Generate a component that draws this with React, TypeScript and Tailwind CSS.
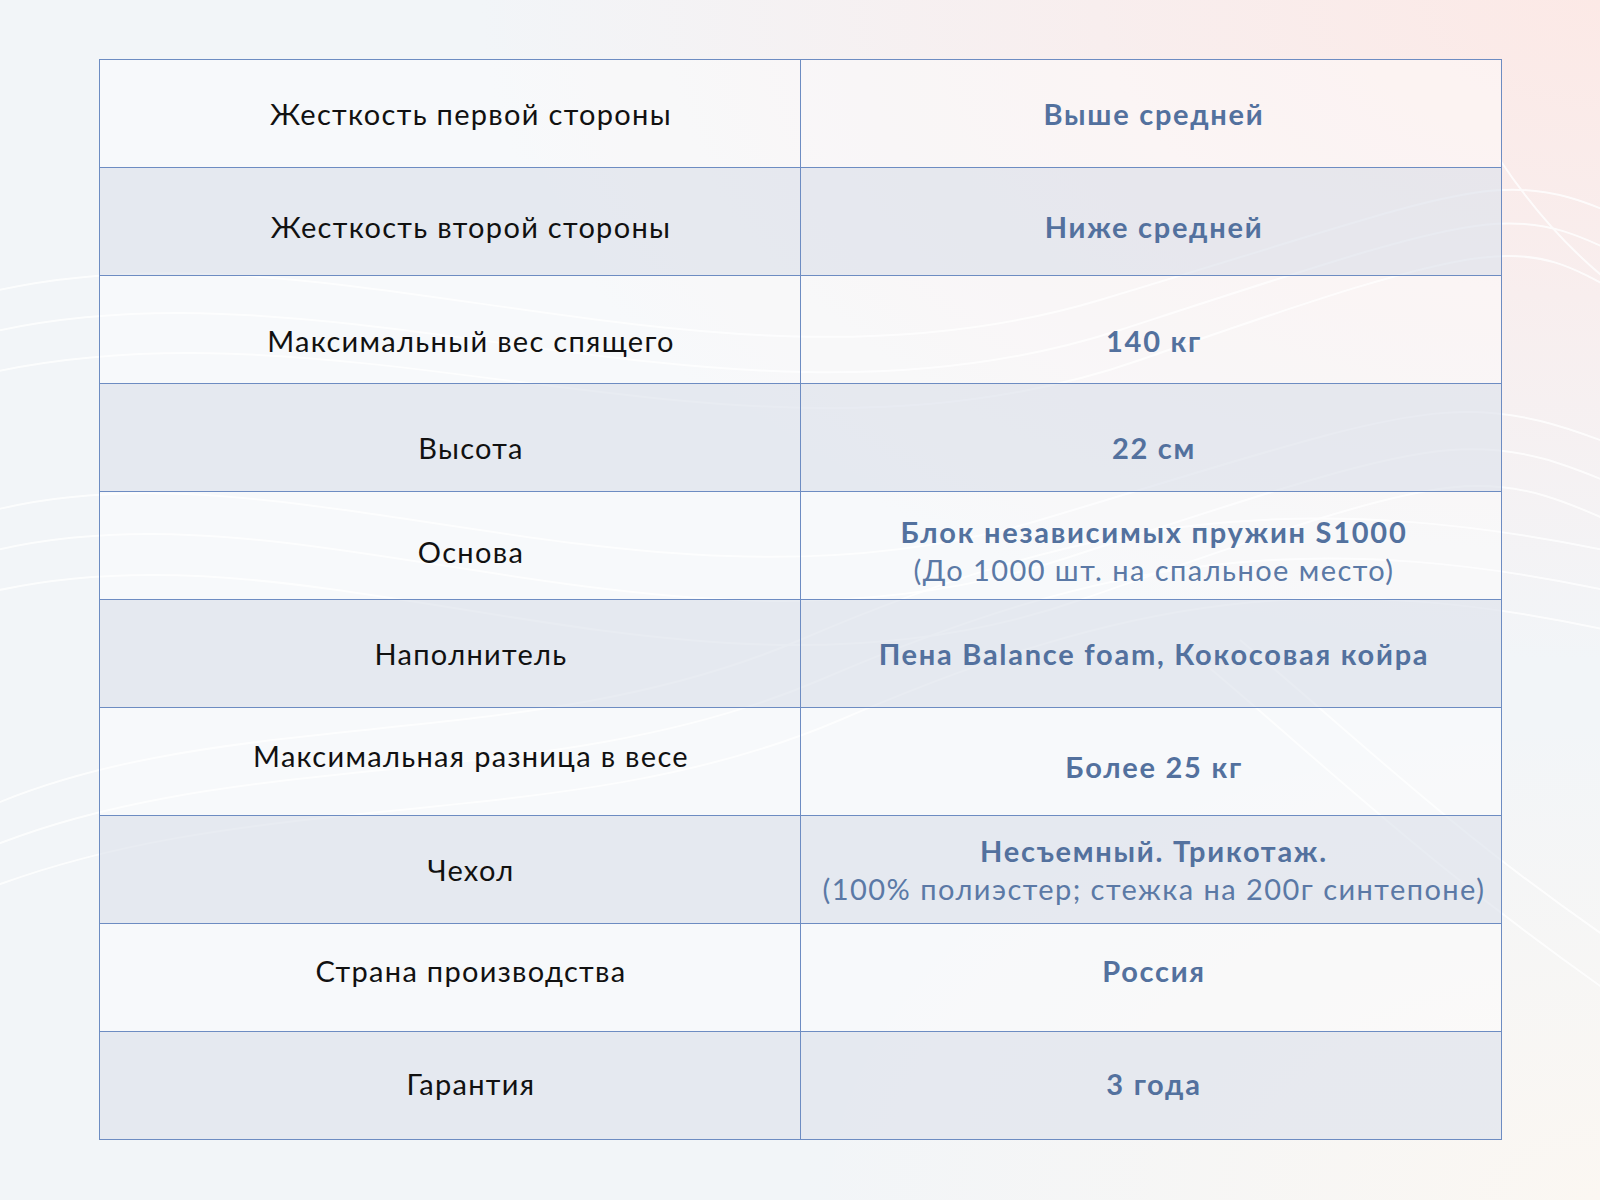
import React from "react";

const rows: { label: string; value: string; note?: string; shift?: string; labelShift?: string; valueShift?: string }[] = [
  { label: "Жесткость первой стороны", value: "Выше средней" },
  { label: "Жесткость второй стороны", value: "Ниже средней", shift: "pt-[11px]" },
  { label: "Максимальный вес спящего", value: "140 кг", shift: "pt-[23px]" },
  { label: "Высота", value: "22 см", shift: "pt-[20px]" },
  {
    label: "Основа",
    value: "Блок независимых пружин S1000",
    note: "(До 1000 шт. на спальное место)",
    labelShift: "pt-[12px]",
    valueShift: "pt-[10px]",
  },
  { label: "Наполнитель", value: "Пена Balance foam, Кокосовая койра" },
  {
    label: "Максимальная разница в весе",
    value: "Более 25 кг",
    labelShift: "pb-[12px]",
    valueShift: "pt-[10px]",
  },
  {
    label: "Чехол",
    value: "Несъемный. Трикотаж.",
    note: "(100% полиэстер; стежка на 200г синтепоне)",
  },
  { label: "Страна производства", value: "Россия", shift: "pb-[14px]" },
  { label: "Гарантия", value: "3 года", shift: "pb-[4px]" },
];

function Waves() {
  return (
    <svg
      className="absolute inset-0 pointer-events-none"
      width="1600"
      height="1200"
      viewBox="0 0 1600 1200"
      fill="none"
    >
      <g stroke="#ffffff" strokeWidth="2" opacity="0.8">
        <path d="M-40 300 C 300 200, 700 420, 1100 300 S 1500 160, 1650 230" />
        <path d="M-40 340 C 320 240, 720 460, 1120 330 S 1510 200, 1650 270" />
        <path d="M-40 380 C 340 280, 740 500, 1140 360 S 1520 240, 1650 310" />
        <path d="M-40 520 C 260 420, 640 640, 1040 520 S 1460 380, 1650 460" />
        <path d="M-40 560 C 280 460, 660 690, 1060 560 S 1470 420, 1650 500" />
        <path d="M-40 600 C 300 500, 680 740, 1080 600 S 1480 460, 1650 540" />
        <path d="M-40 820 C 200 700, 520 760, 800 640 S 1300 480, 1650 560" />
        <path d="M-40 860 C 220 740, 540 800, 820 680 S 1310 520, 1650 600" />
        <path d="M-40 900 C 240 780, 560 840, 840 720 S 1320 560, 1650 640" />
        <path d="M1200 660 C 1320 760, 1420 860, 1620 1000" />
        <path d="M1240 640 C 1360 740, 1460 840, 1640 960" />
        <path d="M1500 160 C 1540 220, 1580 260, 1620 290" />
      </g>
    </svg>
  );
}

export default function App() {
  return (
    <div
      className="relative w-[1600px] h-[1200px] overflow-hidden bg-[#f2f5f8]"
      style={{ fontFamily: "Lato, 'Open Sans', sans-serif" }}
    >
      <div className="absolute inset-0 bg-[radial-gradient(ellipse_70%_55%_at_100%_0%,#fce9e6_0%,#f8eeee_45%,rgba(242,245,248,0)_100%)]" />
      <div className="absolute inset-0 bg-[radial-gradient(ellipse_50%_40%_at_100%_100%,#fbf7f2_0%,rgba(242,245,248,0)_100%)]" />
      <Waves />
      <div className="relative pt-[59px] pl-[99px]">
        <div className="w-[1403px] border-l border-t border-[#6d8cc2]">
          {rows.map((r, i) => (
            <div
              key={i}
              className={`flex h-[108px] ${i % 2 === 1 ? "bg-[#dfe4ec]/70" : "bg-white/40"}`}
            >
              <div
                className={`w-[701px] flex items-center justify-center pl-[42px] border-r border-b border-[#6d8cc2] text-[29px] tracking-[0.045em] text-[#111111] ${r.shift ?? ""} ${r.labelShift ?? ""}`}
              >
                {r.label}
              </div>
              <div
                className={`w-[701px] flex flex-col items-center justify-center pl-[6px] border-r border-b border-[#6d8cc2] text-[29px] leading-[38px] text-[#53719e] ${r.shift ?? ""} ${r.valueShift ?? ""}`}
              >
                <span className="font-bold tracking-[0.06em]">{r.value}</span>
                {r.note && <span className="tracking-[0.05em] text-[#5b79a6]">{r.note}</span>}
              </div>
            </div>
          ))}
        </div>
      </div>
    </div>
  );
}
